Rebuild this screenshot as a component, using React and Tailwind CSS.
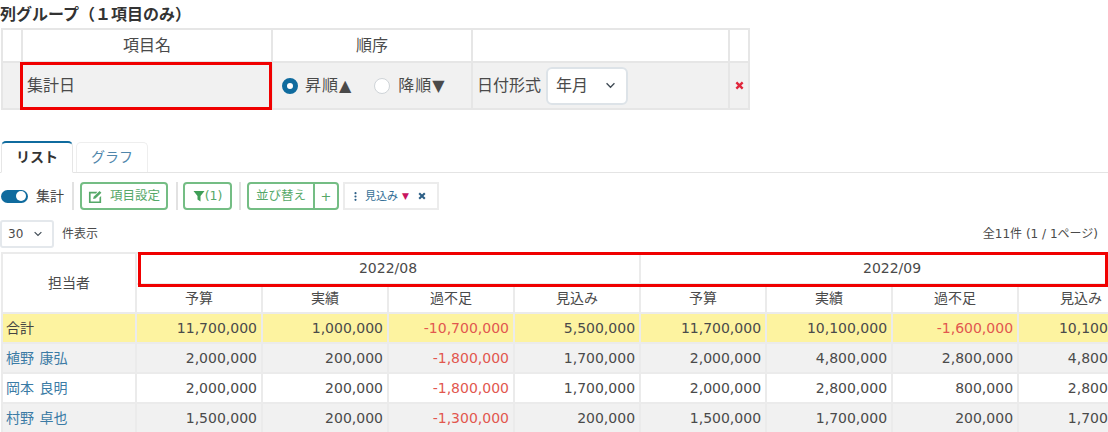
import React from "react";

const font = { fontFamily: '"DejaVu Sans", "Noto Sans CJK JP", sans-serif' };
const heads = ["予算", "実績", "過不足", "見込み"];
const rows = [
  { name: "合計", total: true, v: ["11,700,000", "1,000,000", "-10,700,000", "5,500,000", "11,700,000", "10,100,000", "-1,600,000", "10,100,000"] },
  { name: "植野 康弘", v: ["2,000,000", "200,000", "-1,800,000", "1,700,000", "2,000,000", "4,800,000", "2,800,000", "4,800,000"] },
  { name: "岡本 良明", white: true, v: ["2,000,000", "200,000", "-1,800,000", "1,700,000", "2,000,000", "2,800,000", "800,000", "2,800,000"] },
  { name: "村野 卓也", v: ["1,500,000", "200,000", "-1,300,000", "200,000", "1,500,000", "1,700,000", "200,000", "1,700,000"] },
];

function Chevron({ className }) {
  return (
    <svg viewBox="0 0 12 8" className={className} fill="none" stroke="#3f4a54" strokeWidth="1.5">
      <path d="M1.5 1.5 6 6l4.5-4.5" />
    </svg>
  );
}

function Cross({ className, color }) {
  return (
    <svg viewBox="0 0 10 10" className={className} fill="none" stroke={color} strokeWidth="2.6">
      <path d="M1.500 1.500l7 7M8.500 1.500l-7 7" />
    </svg>
  );
}

function Sep() {
  return <div className="w-[2px] h-[28px] bg-[#e2e2e2]" />;
}

export default function App() {
  return (
    <div className="relative w-[1108px] h-[432px] overflow-hidden bg-white text-[#4a4a4a]" style={font}>
      <div className="h-[28px] pt-[5px] pl-[0px] text-[16px] leading-[20px] font-bold text-[#333]">列グループ（１項目のみ）</div>

      <table className="table-fixed border-collapse w-[748px] ml-[1px] text-[16px] border-2 border-[#e6e6e6]">
        <colgroup>
          <col className="w-[20px]" />
          <col className="w-[250px]" />
          <col className="w-[200px]" />
          <col className="w-[257px]" />
          <col className="w-[20px]" />
        </colgroup>
        <tbody>
          <tr className="h-[33px]">
            <td className="border-2 border-[#e6e6e6]" />
            <td className="border-2 border-[#e6e6e6] text-center">項目名</td>
            <td className="border-2 border-[#e6e6e6] text-center">順序</td>
            <td className="border-2 border-[#e6e6e6]" />
            <td className="border-2 border-[#e6e6e6]" />
          </tr>
          <tr className="h-[47px] bg-[#f1f1f1]">
            <td className="border-2 border-[#e6e6e6]" />
            <td className="border-2 border-[#e6e6e6] pl-[4px]">集計日</td>
            <td className="border-2 border-[#e6e6e6] pl-[9px]">
              <div className="flex items-center">
                <span className="w-[16px] h-[16px] rounded-full border-[5px] border-[#0f6b9e] bg-white" />
                <span className="ml-[7px] tracking-[1px]">昇順▲</span>
                <span className="ml-[22px] w-[16px] h-[16px] rounded-full border border-[#cfd4d8] bg-white" />
                <span className="ml-[8px] tracking-[1px]">降順▼</span>
              </div>
            </td>
            <td className="border-2 border-[#e6e6e6] pl-[4px]">
              <div className="flex items-center">
                <span>日付形式</span>
                <div className="ml-[5px] w-[82px] h-[38px] rounded-[6px] border-2 border-[#dde3e8] bg-white flex items-center justify-between pl-[8px] pr-[10px]">
                  <span>年月</span>
                  <Chevron className="w-[11px] h-[7px]" />
                </div>
              </div>
            </td>
            <td className="border-2 border-[#e6e6e6]">
              <div className="flex justify-center">
                <Cross className="w-[9px] h-[9px]" color="#e0263c" />
              </div>
            </td>
          </tr>
        </tbody>
      </table>

      <div className="mt-[31px] pl-[1px] flex items-end h-[32px] border-b border-[#e4e4e4]">
        <div className="w-[72px] h-[32px] -mb-px bg-white border border-[#e6e6e6] border-b-white border-t-2 border-t-[#0f6b9e] rounded-t-[5px] flex items-center justify-center text-[14px] font-bold text-[#333]">リスト</div>
        <div className="ml-[3px] w-[72px] h-[30px] border border-[#eeeeee] border-b-0 rounded-t-[5px] flex items-center justify-center text-[14px] text-[#4f86ab]">グラフ</div>
      </div>

      <div className="mt-[9px] flex items-center h-[28px] pl-[1px] text-[12.5px] leading-none">
        <div className="w-[27px] h-[13px] rounded-full bg-[#0f6b9e] flex items-center justify-end pr-[2px]">
          <div className="w-[10px] h-[10px] rounded-full bg-white" />
        </div>
        <span className="ml-[8px] text-[14px] text-[#444]">集計</span>
        <div className="ml-[8px]"><Sep /></div>
        <div className="ml-[6px] w-[88px] h-[28px] rounded-[4px] border-2 border-[#74bd84] flex items-center justify-center gap-[7px] text-[#55a868]">
          <svg viewBox="0 0 16 16" className="w-[15px] h-[15px]" fill="#55a868">
            <path d="M1 3h9L8.500 4.800H2.800v8.400h9.400V9L14 7.500V15H1z" />
            <path d="M6 8.200 12.300 2l2 2L8 10.200l-2.500.4z" />
          </svg>
          <span>項目設定</span>
        </div>
        <div className="ml-[8px]"><Sep /></div>
        <div className="ml-[5px] w-[49px] h-[28px] rounded-[4px] border-2 border-[#74bd84] flex items-center justify-center text-[#55a868]">
          <svg viewBox="0 0 12 12" className="w-[12px] h-[12px]" fill="#3f9e57">
            <path d="M.5 1h11L7.500 6v5.500L4.500 9.500V6z" />
          </svg>
          <span>(1)</span>
        </div>
        <div className="ml-[7px]"><Sep /></div>
        <div className="ml-[6px] h-[28px] rounded-[4px] border-2 border-[#74bd84] flex items-center text-[#55a868]">
          <span className="w-[64px] text-center">並び替え</span>
          <span className="w-[24px] h-full border-l-2 border-[#74bd84] flex items-center justify-center text-[13px]">+</span>
        </div>
        <div className="ml-[4px] w-[96px] h-[28px] border-2 border-[#ececec] flex items-center pl-[8px] text-[11px] text-[#356f96]">
          <svg viewBox="0 0 6 12" className="w-[5px] h-[11px]" fill="#2d5f86">
            <circle cx="3" cy="2" r="1.300" />
            <circle cx="3" cy="6" r="1.300" />
            <circle cx="3" cy="10" r="1.300" />
          </svg>
          <span className="ml-[7px]">見込み</span>
          <span className="ml-[4px] text-[9px] text-[#c8145f]">▼</span>
          <Cross className="ml-[9px] w-[8px] h-[8px]" color="#2d5f86" />
        </div>
      </div>

      <div className="mt-[9px] h-[29px] flex items-center justify-between pl-[0px] pr-[10px] text-[12px]">
        <div className="flex items-center">
          <div className="w-[54px] h-[28px] rounded-[3px] border-2 border-[#e4e8ec] flex items-center justify-between pl-[6px] pr-[9px]">
            <span>30</span>
            <Chevron className="w-[10px] h-[6px]" />
          </div>
          <span className="ml-[8px]">件表示</span>
        </div>
        <span>全11件 (1 / 1ページ)</span>
      </div>

      <div className="mt-[4px] overflow-hidden w-[1108px]">
        <table className="table-fixed border-collapse w-[1143px] ml-[1px] text-[14px]">
          <colgroup>
            <col className="w-[134px]" />
            {Array.from({ length: 8 }).map((_, i) => <col key={i} className="w-[126px]" />)}
          </colgroup>
          <thead>
            <tr className="h-[31px]">
              <th rowSpan={2} className="font-normal border-2 border-[#ebebeb]">担当者</th>
              <th colSpan={4} className="font-normal border-2 border-[#ebebeb]">2022/08</th>
              <th colSpan={4} className="font-normal border-2 border-[#ebebeb]">2022/09</th>
            </tr>
            <tr className="h-[29px]">
              {[...heads, ...heads].map((h, i) => (
                <th key={i} className="font-normal border-2 border-[#ebebeb]">{h}</th>
              ))}
            </tr>
          </thead>
          <tbody>
            {rows.map((r) => (
              <tr key={r.name} className={`h-[30px] ${r.total ? "bg-[#fdf3a0]" : r.white ? "bg-white" : "bg-[#f1f1f1]"}`}>
                <td className={`border-2 border-[#ebebeb] pl-[3px] [word-spacing:1px] ${r.total ? "text-[#444]" : "text-[#3b7ba5]"}`}>{r.name}</td>
                {r.v.map((c, i) => (
                  <td key={i} className={`border-2 border-[#ebebeb] text-right pr-[4px] ${c.startsWith("-") ? "text-[#e2574f]" : ""}`}>{c}</td>
                ))}
              </tr>
            ))}
          </tbody>
        </table>
      </div>

      <div className="absolute left-[20px] top-[62px] w-[252px] h-[48px] border-[3px] border-[#f00000]" />
      <div className="absolute left-[138px] top-[252px] w-[970px] h-[35px] border-[3px] border-[#f00000]" />
    </div>
  );
}
